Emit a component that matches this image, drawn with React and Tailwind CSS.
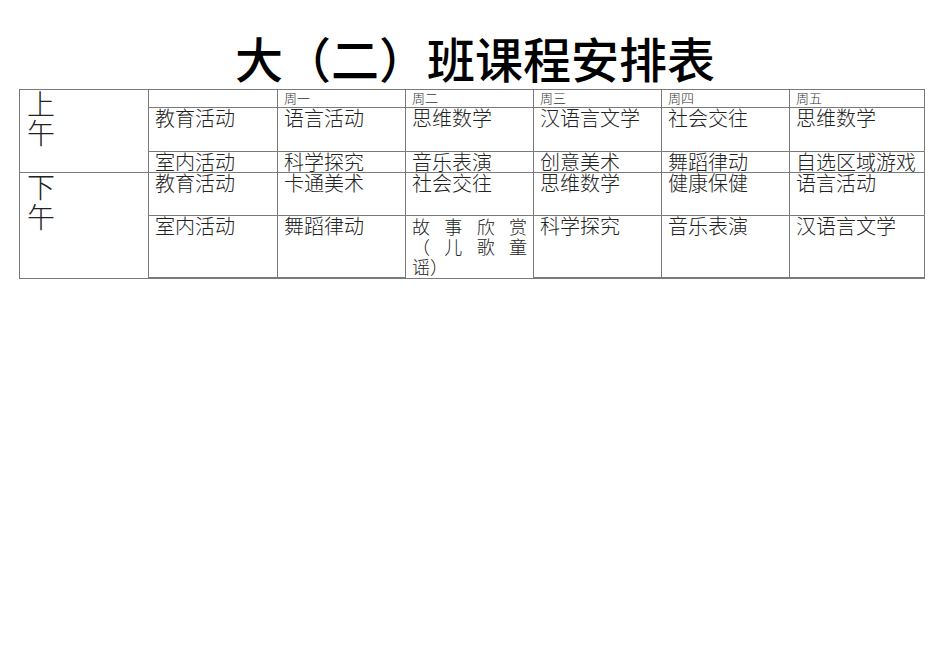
const body = '"Liberation Serif", "Noto Sans CJK SC", serif';
const title = '"Liberation Sans", "Noto Sans CJK SC", sans-serif';

const days = ["周一", "周二", "周三", "周四", "周五"];

const rows = [
  { label: "教育活动", items: ["语言活动", "思维数学", "汉语言文学", "社会交往", "思维数学"], h: "h-[43px]" },
  { label: "室内活动", items: ["科学探究", "音乐表演", "创意美术", "舞蹈律动", "自选区域游戏"], h: "h-[20px]" },
  { label: "教育活动", items: ["卡通美术", "社会交往", "思维数学", "健康保健", "语言活动"], h: "h-[42px]" },
  { label: "室内活动", items: ["舞蹈律动", null, "科学探究", "音乐表演", "汉语言文学"], h: "h-[61px]" },
];

function Cell({ children, className = "" }) {
  return (
    <div className={`bg-white px-[6px] text-[20px] leading-[22px] font-light text-[#222] whitespace-nowrap overflow-visible ${className}`}>
      {children}
    </div>
  );
}

function StoryCell() {
  return (
    <div className="bg-white pl-[6px] pr-[6px] pt-[2px] text-[18px] leading-[20px] font-light text-[#222]">
      <div className="flex justify-between">
        <span>故</span><span>事</span><span>欣</span><span>赏</span>
      </div>
      <div className="flex justify-between">
        <span>（</span><span>儿</span><span>歌</span><span>童</span>
      </div>
      <div>谣）</div>
    </div>
  );
}

export default function App() {
  return (
    <div className="w-[950px] h-[672px] bg-white" style={{ fontFamily: body }}>
      <h1
        className="pt-[36px] h-[89px] text-center text-[48px] leading-[52px] font-medium text-black"
        style={{ fontFamily: title }}
      >
        大（二）班课程安排表
      </h1>

      <div className="ml-[19px] w-[906px] bg-[#7a7a7a] p-px grid grid-cols-[128px_128px_127px_127px_127px_127px_134px] gap-px">
        {/* 上午 */}
        <div className="row-span-3 bg-white pl-[7px] pt-px text-[28px] leading-[29px] font-light text-[#222]">
          <div>上</div>
          <div>午</div>
        </div>
        <div className="bg-white h-[17px]" />
        {days.map((d) => (
          <div key={d} className="bg-white h-[17px] px-[6px] text-[13px] leading-[17px] font-light text-[#333]">
            {d}
          </div>
        ))}

        {rows.slice(0, 2).map((r, i) => (
          <Row key={i} row={r} />
        ))}

        {/* 下午 */}
        <div className="row-span-2 bg-white pl-[7px] pt-px text-[28px] leading-[30px] font-light text-[#222]">
          <div>下</div>
          <div>午</div>
        </div>
        {rows.slice(2).map((r, i) => (
          <Row key={i} row={r} />
        ))}
      </div>
    </div>
  );
}

function Row({ row }) {
  return (
    <>
      <Cell className={row.h}>{row.label}</Cell>
      {row.items.map((t, i) =>
        t === null ? <StoryCell key={i} /> : <Cell key={i} className={row.h}>{t}</Cell>
      )}
    </>
  );
}
